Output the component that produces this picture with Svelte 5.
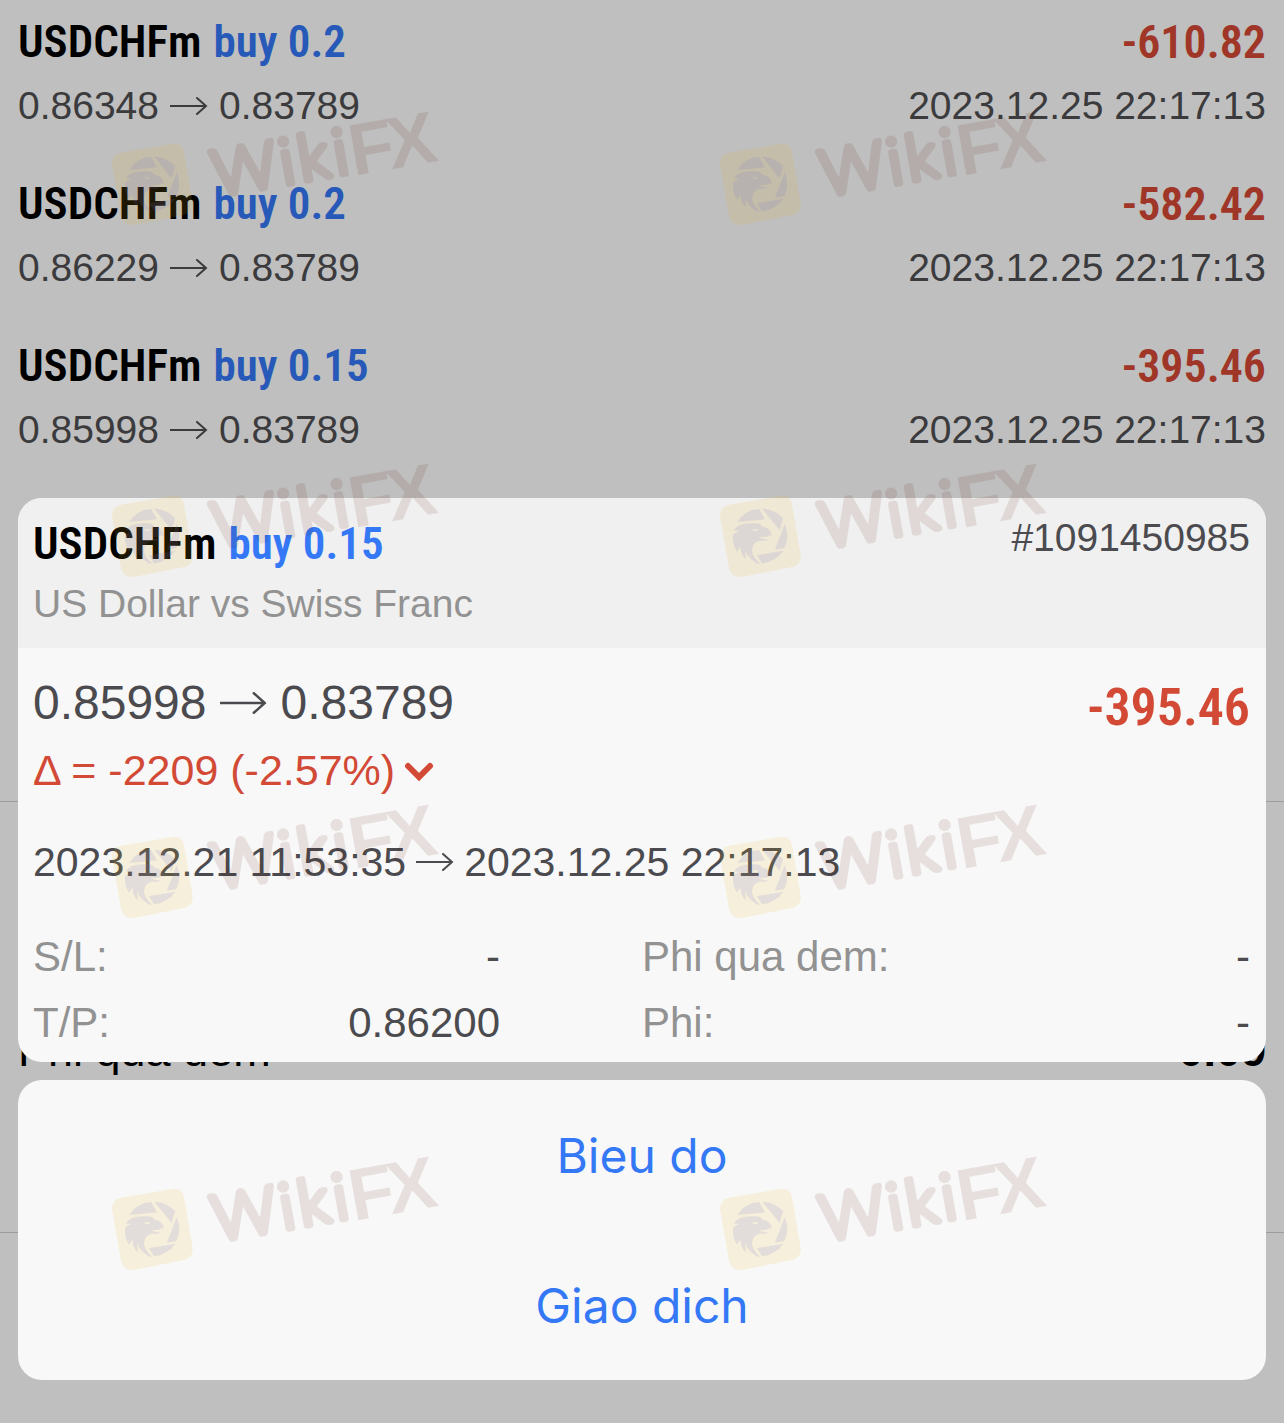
<script>
  const deals = [
    { symbol: 'USDCHFm', side: 'buy 0.2', open: '0.86348', close: '0.83789', profit: '-610.82', time: '2023.12.25 22:17:13' },
    { symbol: 'USDCHFm', side: 'buy 0.2', open: '0.86229', close: '0.83789', profit: '-582.42', time: '2023.12.25 22:17:13' },
    { symbol: 'USDCHFm', side: 'buy 0.15', open: '0.85998', close: '0.83789', profit: '-395.46', time: '2023.12.25 22:17:13' }
  ];
  const details = [
    { label: 'S/L:', value: '-' },
    { label: 'Phi qua dem:', value: '-' },
    { label: 'T/P:', value: '0.86200' },
    { label: 'Phi:', value: '-' }
  ];
  const marks = [95, 447, 788, 1140].flatMap((top) => [100, 708].map((left) => ({ top, left })));
</script>

{#snippet arrow(size)}
  <svg class="arrow {size}" viewBox="0 0 38 18" role="img" aria-label="to">
    <path d="M0 9H36M27 1L36 9L27 17" />
  </svg>
{/snippet}

<div class="screen">
  <main class="history">
    <ul class="deals">
      {#each deals as deal}
        <li class="deal">
          <div class="line head">
            <span class="title"><b>{deal.symbol}</b><i>{deal.side}</i></span>
            <strong class="amount">{deal.profit}</strong>
          </div>
          <div class="line sub">
            <span class="move">{deal.open}{@render arrow('small')}{deal.close}</span>
            <time>{deal.time}</time>
          </div>
        </li>
      {/each}
    </ul>
    <div class="rule upper"></div>
    <div class="total"><span>Phi qua dem</span><b>0.09</b></div>
    <div class="rule lower"></div>
  </main>

  <div class="sheet">
    <section class="card">
      <header>
        <div>
          <h1 class="title"><b>USDCHFm</b><i>buy 0.15</i></h1>
          <p class="name">US Dollar vs Swiss Franc</p>
        </div>
        <span class="ticket">#1091450985</span>
      </header>
      <div class="body">
        <div class="line result">
          <span class="move big">0.85998{@render arrow('large')}0.83789</span>
          <strong class="amount profit">-395.46</strong>
        </div>
        <p class="delta">
          Δ = -2209 (-2.57%)
          <svg class="chevron" viewBox="0 0 28 20" aria-hidden="true"><path d="M3 6L14 17L25 6" /></svg>
        </p>
        <p class="move period">2023.12.21 11:53:35{@render arrow('small')}2023.12.25 22:17:13</p>
        <dl>
          {#each details as item}
            <div><dt>{item.label}</dt><dd>{item.value}</dd></div>
          {/each}
        </dl>
      </div>
    </section>
    <nav class="card actions">
      <button type="button">Bieu do</button>
      <button type="button">Giao dich</button>
    </nav>
  </div>

  <div class="marks" aria-hidden="true">
    {#each marks as mark}
      <svg viewBox="0 0 1050 450" style="top: {mark.top}px; left: {mark.left}px">
        <g class="badge">
          <path d="M64 173L216 147Q246 143 252 172L278 324Q281 353 252 360L101 390Q70 392 63 362L36 208Q34 180 64 173Z" />
        </g>
        <g class="bird">
          <path d="M88 225Q112 188 153 186L171 217Z" />
          <path d="M163 185Q201 187 225 213L215 250Z" />
          <path d="M230 231Q246 270 229 303L201 308Z" />
          <path d="M226 311Q202 344 162 349L147 325Z" />
          <path fill-rule="evenodd" d="M77 250Q92 226 138 229Q157 227 163 239Q186 240 192 266Q181 262 178 269L151 271Q163 276 181 278Q169 283 153 281Q132 288 132 312Q134 332 157 350L146 349Q119 332 111 308L114 336Q96 323 98 298L87 314Q73 291 75 264Q83 255 95 252Q82 251 77 250ZM131 247Q139 256 149 251L151 247Z" />
        </g>
        <g class="word" transform="rotate(-10 390 308)">
          <text class="round" x="351 555 611 718" y="297">Wiki</text>
          <text x="766 882" y="308">FX</text>
        </g>
      </svg>
    {/each}
  </div>
</div>

<style>
  :global(body) {
    margin: 0;
    background: #bfbfbf;
  }
  .screen {
    position: relative;
    min-height: 100vh;
    overflow: hidden;
    background: #bfbfbf;
    font-family: 'Liberation Sans', Arial, sans-serif;
    color: #3b3b3d;
  }
  ul, p, h1, dl, dd {
    margin: 0;
    padding: 0;
    list-style: none;
  }
  .line {
    display: flex;
    justify-content: space-between;
    align-items: center;
  }
  .deals {
    padding: 12px 18px 0;
  }
  .deal {
    height: 162px;
  }
  .head {
    height: 60px;
  }
  .sub {
    height: 68px;
    font-size: 39px;
  }
  .title {
    display: flex;
    align-items: baseline;
    gap: 12px;
    font-family: 'Avenir Next Condensed', 'Roboto Condensed', Roboto, sans-serif;
    font-size: 45px;
    font-weight: 600;
    line-height: 60px;
  }
  .title b {
    font-weight: 600;
    color: #000;
  }
  .title i {
    font-style: normal;
    color: #2759b8;
  }
  .amount {
    font-family: 'Avenir Next Condensed', 'Roboto Condensed', Roboto, sans-serif;
    font-size: 46px;
    font-weight: 600;
    color: #9f3628;
  }
  .move {
    display: flex;
    align-items: center;
    gap: 11px;
  }
  .arrow {
    fill: none;
    stroke: currentColor;
    stroke-width: 2;
    stroke-linecap: round;
  }
  .arrow.small {
    width: 38px;
    height: 18px;
  }
  .arrow.large {
    width: 48px;
    height: 22px;
  }
  .rule {
    height: 1px;
    background: #9c9c9e;
  }
  .upper {
    margin-top: 303px;
  }
  .total {
    display: flex;
    justify-content: space-between;
    padding: 223px 18px 0;
    font-size: 45px;
    line-height: 52px;
    color: #000;
  }
  .lower {
    margin-top: 155px;
  }
  .sheet {
    position: absolute;
    inset: auto 18px 43px;
    display: flex;
    flex-direction: column;
    gap: 18px;
  }
  .card {
    border-radius: 24px;
    overflow: hidden;
    background: #f8f8f8;
    color: #4b4b4f;
  }
  header {
    display: flex;
    justify-content: space-between;
    align-items: flex-start;
    padding: 16px 16px 14px 15px;
    background: #f0f0f0;
  }
  header .title i {
    color: #3478f6;
  }
  .name {
    font-size: 39px;
    line-height: 60px;
    color: #929292;
  }
  .ticket {
    font-size: 39px;
    line-height: 48px;
  }
  .body {
    padding: 22px 16px 6px 15px;
  }
  .result {
    align-items: flex-start;
    height: 66px;
  }
  .big {
    gap: 13px;
    font-size: 48px;
    line-height: 66px;
  }
  .profit {
    font-size: 52px;
    line-height: 76px;
    color: #d24a36;
  }
  .delta {
    display: flex;
    align-items: center;
    gap: 10px;
    font-size: 43px;
    line-height: 68px;
    color: #d24a36;
  }
  .chevron {
    width: 28px;
    height: 20px;
    overflow: visible;
    fill: none;
    stroke: currentColor;
    stroke-width: 6;
    stroke-linecap: round;
  }
  .period {
    padding: 24px 0 28px;
    gap: 10px;
    font-size: 41px;
    line-height: 68px;
  }
  dl {
    display: grid;
    grid-template-columns: 467fr 608fr;
    column-gap: 142px;
    font-size: 42px;
    line-height: 66px;
  }
  dl div {
    display: flex;
    justify-content: space-between;
  }
  dt {
    color: #929292;
  }
  .actions {
    display: flex;
    flex-direction: column;
  }
  button {
    height: 150px;
    padding: 0;
    border: 0;
    background: none;
    font-family: Inter, sans-serif;
    font-size: 48px;
    color: #3478f6;
  }
  .marks {
    position: absolute;
    inset: 0;
    pointer-events: none;
  }
  .marks svg {
    position: absolute;
    width: 350px;
    height: 150px;
  }
  .badge {
    fill: #f0b714;
    opacity: 0.12;
  }
  .bird {
    fill: #7070d8;
    opacity: 0.14;
  }
  .word {
    fill: #501408;
    opacity: 0.1;
    font-size: 220px;
    font-weight: 700;
  }
  .round {
    font-family: Lato, sans-serif;
    font-size: 190px;
    font-weight: 300;
    stroke: #501408;
    stroke-width: 20px;
    stroke-linejoin: round;
  }
</style>
